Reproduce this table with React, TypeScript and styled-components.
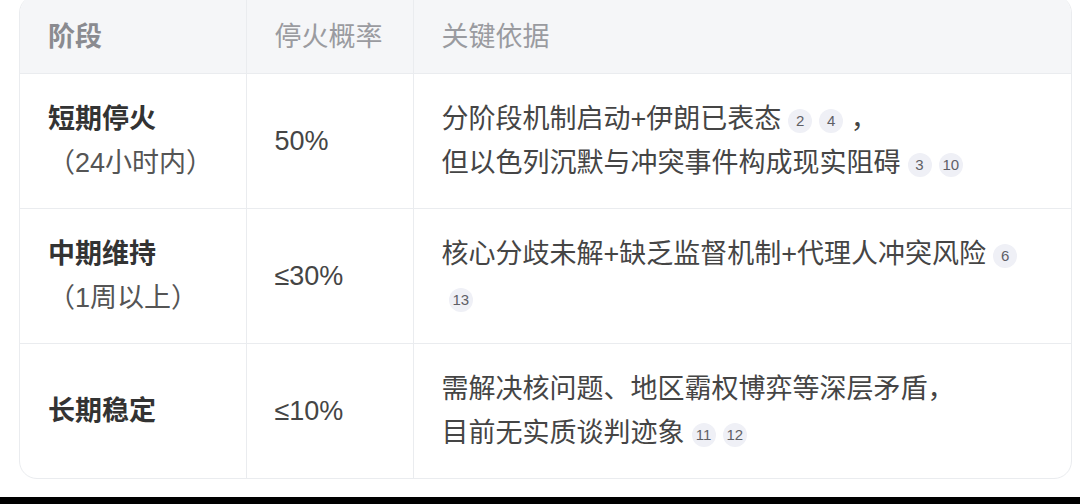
import React from 'react'
import styled, { createGlobalStyle } from 'styled-components'

const GlobalStyle = createGlobalStyle`
  html, body {
    margin: 0;
    padding: 0;
    background: #ffffff;
  }
  body {
    font-family: 'Liberation Sans', 'Noto Sans CJK SC', sans-serif;
    overflow: hidden;
  }
`

const Page = styled.div`
  width: 1080px;
  height: 504px;
  display: flex;
  flex-direction: column;
  overflow: hidden;
`

const Sheet = styled.div`
  flex: 1;
  background: #fff;
  padding: 0 8px 0 19px;
  margin-top: -5px;
`

const Frame = styled.div`
  border: 1px solid #eaecef;
  border-radius: 18px;
  overflow: hidden;
`

const Table = styled.table`
  width: 100%;
  border-collapse: collapse;
  table-layout: fixed;
  font-size: 27px;
  line-height: 44px;
  color: #454545;
`

const Col = styled.col<{ $w?: number }>`
  width: ${(p) => (p.$w ? `${p.$w}px` : 'auto')};
`

const HeadRow = styled.tr`
  background: #f5f6f8;
  height: 77px;
`

const HeadCell = styled.th<{ $strong?: boolean }>`
  box-sizing: border-box;
  text-align: left;
  font-weight: ${(p) => (p.$strong ? 700 : 400)};
  color: ${(p) => (p.$strong ? '#8a8b90' : '#9a9ba0')};
  padding: 5px 28px 0;
  border-bottom: 1px solid #eaecef;
  & + & {
    border-left: 1px solid #eaecef;
  }
`

const Row = styled.tr`
  & + & {
    border-top: 1px solid #eaecef;
  }
`

const Cell = styled.td`
  box-sizing: border-box;
  padding: 23px 28px;
  vertical-align: middle;
  & + & {
    border-left: 1px solid #eaecef;
  }
`

const Stage = styled.div`
  font-weight: 700;
  color: #333;
`

const Range = styled.div`
  color: #555;
`

const Cite = styled.span`
  display: inline-block;
  min-width: 24px;
  height: 24px;
  padding: 0 4px;
  box-sizing: border-box;
  margin-left: 7px;
  border-radius: 12px;
  background: #eff0f6;
  color: #5f6066;
  font-size: 15px;
  line-height: 24px;
  text-align: center;
  vertical-align: 2px;
  font-family: 'Liberation Sans', sans-serif;
`

const Footer = styled.div`
  height: 7px;
  background: #000;
`

type Line = { text: string; cites?: string[]; tail?: string }

const rows: {
  stage: string
  range?: string
  odds: string
  lines: Line[]
}[] = [
  {
    stage: '短期停火',
    range: '（24小时内）',
    odds: '50%',
    lines: [
      { text: '分阶段机制启动+伊朗已表态', cites: ['2', '4'], tail: ' ，' },
      { text: '但以色列沉默与冲突事件构成现实阻碍', cites: ['3', '10'] },
    ],
  },
  {
    stage: '中期维持',
    range: '（1周以上）',
    odds: '≤30%',
    lines: [
      { text: '核心分歧未解+缺乏监督机制+代理人冲突风险', cites: ['6', '13'] },
    ],
  },
  {
    stage: '长期稳定',
    odds: '≤10%',
    lines: [
      { text: '需解决核问题、地区霸权博弈等深层矛盾，' },
      { text: '目前无实质谈判迹象', cites: ['11', '12'] },
    ],
  },
]

const App = () => {
  return (
    <Page>
      <GlobalStyle />
      <Sheet>
        <Frame>
          <Table>
            <colgroup>
              <Col $w={226} />
              <Col $w={167} />
              <Col />
            </colgroup>
            <thead>
              <HeadRow>
                <HeadCell $strong>阶段</HeadCell>
                <HeadCell>停火概率</HeadCell>
                <HeadCell>关键依据</HeadCell>
              </HeadRow>
            </thead>
            <tbody>
              {rows.map((r) => (
                <Row key={r.stage}>
                  <Cell>
                    <Stage>{r.stage}</Stage>
                    {r.range && <Range>{r.range}</Range>}
                  </Cell>
                  <Cell>{r.odds}</Cell>
                  <Cell>
                    {r.lines.map((l, i) => (
                      <div key={i}>
                        {l.text}
                        {l.cites?.map((c) => (
                          <Cite key={c}>{c}</Cite>
                        ))}
                        {l.tail}
                      </div>
                    ))}
                  </Cell>
                </Row>
              ))}
            </tbody>
          </Table>
        </Frame>
      </Sheet>
      <Footer />
    </Page>
  )
}

export default App
